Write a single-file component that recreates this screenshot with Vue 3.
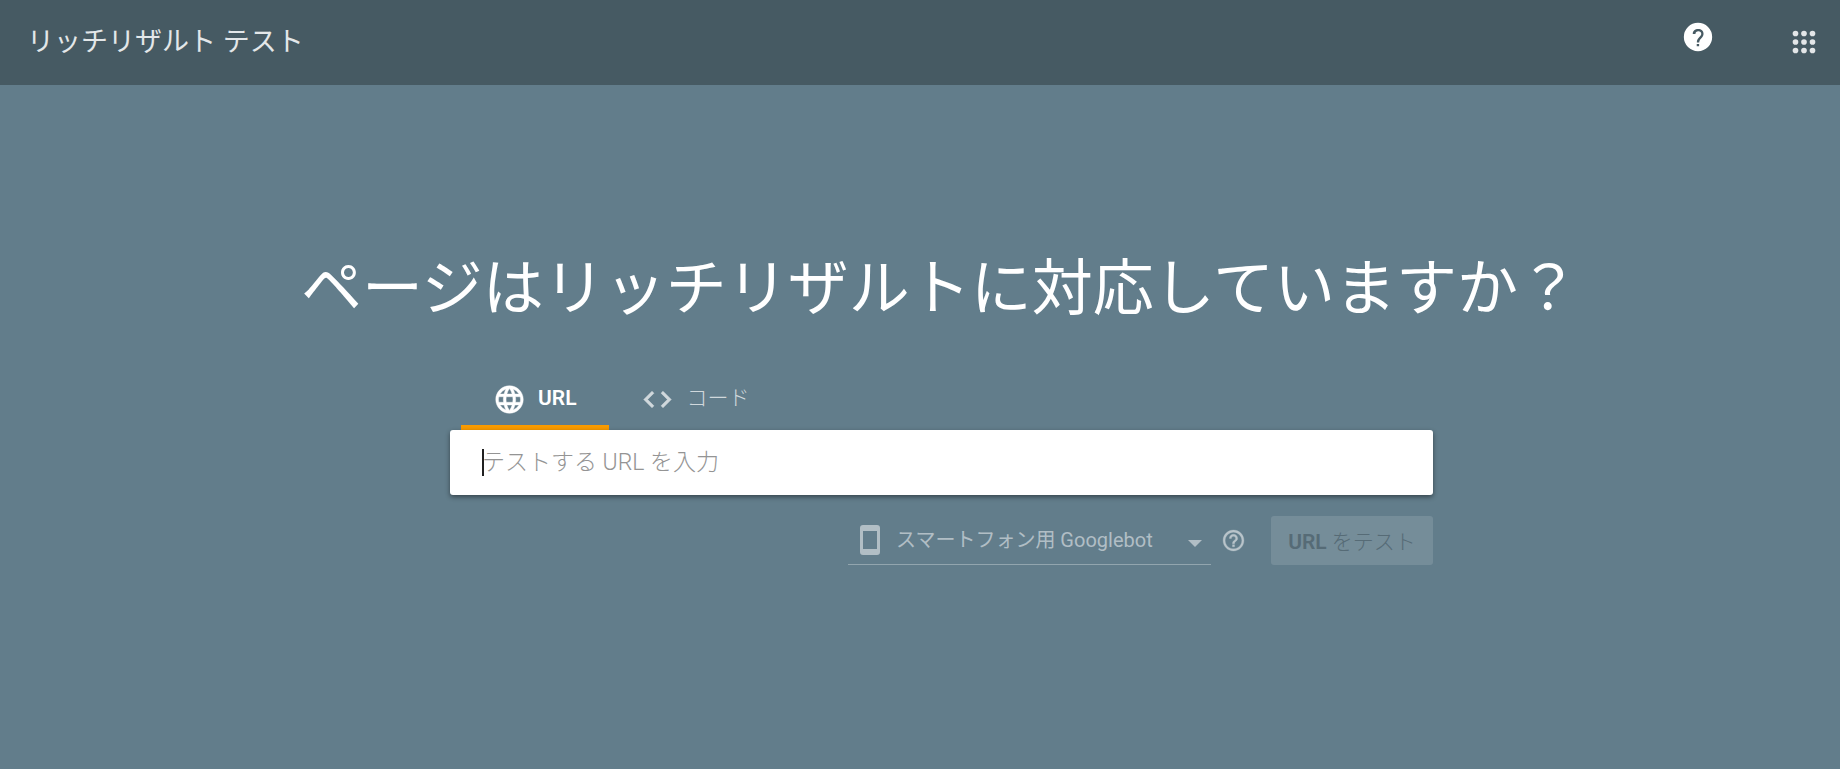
<script setup>
import { ref } from 'vue'

const url = ref('')
const mode = ref('url')
const agent = ref('smartphone')
</script>

<template>
  <div class="page">
    <header class="bar">
      <span class="product">リッチリザルト テスト</span>
      <nav class="actions">
        <button class="icon-button help" type="button" aria-label="ヘルプ">
          <svg viewBox="0 0 24 24" width="34" height="34">
            <path fill="currentColor" fill-rule="evenodd" d="M12 2a10 10 0 1 0 0 20 10 10 0 0 0 0-20zm.8 16.500h-1.700v-1.600h1.700zm2.200-6.300-.9 1c-.8.8-1.200 1.400-1.200 2.600h-1.700v-.4c0-1.200.5-2 1.300-2.900l1.100-1.200c.5-.5.7-1 .7-1.600 0-1.100-.8-1.800-2-1.800-1.300 0-2.100.7-2.100 1.900H8.300c0-2 1.600-3.400 3.800-3.400 2.300 0 3.800 1.300 3.800 3.300 0 1-.4 1.800-.9 2.500z" />
          </svg>
        </button>
        <button class="icon-button apps" type="button" aria-label="アプリ">
          <svg viewBox="0 0 24 24" width="34" height="34" fill="currentColor">
            <circle cx="6" cy="6" r="2" /><circle cx="12" cy="6" r="2" /><circle cx="18" cy="6" r="2" />
            <circle cx="6" cy="12" r="2" /><circle cx="12" cy="12" r="2" /><circle cx="18" cy="12" r="2" />
            <circle cx="6" cy="18" r="2" /><circle cx="12" cy="18" r="2" /><circle cx="18" cy="18" r="2" />
          </svg>
        </button>
      </nav>
    </header>

    <main class="content">
      <h1 class="headline">ページはリッチリザルトに対応していますか？</h1>

      <form class="tester" @submit.prevent>
        <div class="tabs" role="tablist">
          <button class="tab" :class="{ active: mode === 'url' }" type="button" role="tab" :aria-selected="mode === 'url'" @click="mode = 'url'">
            <svg viewBox="0 0 24 24" width="33" height="33">
              <path fill="currentColor" stroke="currentColor" stroke-width=".3" d="M11.990 2C6.470 2 2 6.480 2 12s4.470 10 9.990 10C17.520 22 22 17.520 22 12S17.520 2 11.990 2zm6.930 6h-2.950a15.650 15.650 0 0 0-1.380-3.560A8.030 8.030 0 0 1 18.920 8zM12 4.040c.83 1.200 1.480 2.530 1.910 3.960h-3.820c.43-1.430 1.080-2.760 1.910-3.960zM4.260 14C4.100 13.360 4 12.690 4 12s.1-1.360.26-2h3.380c-.08.66-.14 1.320-.14 2s.06 1.340.14 2H4.260zm.82 2h2.950c.32 1.250.78 2.450 1.380 3.560A7.990 7.990 0 0 1 5.080 16zm2.950-8H5.080a7.990 7.990 0 0 1 4.330-3.560A15.650 15.650 0 0 0 8.030 8zM12 19.960c-.83-1.200-1.480-2.530-1.910-3.960h3.820c-.43 1.430-1.080 2.760-1.910 3.960zM14.340 14H9.660c-.09-.66-.16-1.320-.16-2s.07-1.350.16-2h4.680c.09.65.16 1.320.16 2s-.07 1.340-.16 2zm.25 5.560c.6-1.110 1.060-2.310 1.380-3.560h2.950a8.030 8.030 0 0 1-4.330 3.560zM16.360 14c.08-.66.14-1.320.14-2s-.06-1.340-.14-2h3.380c.16.64.26 1.310.26 2s-.1 1.360-.26 2h-3.380z" />
            </svg>
            <span class="tab-label">URL</span>
          </button>
          <button class="tab" :class="{ active: mode === 'code' }" type="button" role="tab" :aria-selected="mode === 'code'" @click="mode = 'code'">
            <svg viewBox="0 0 24 24" width="33" height="33">
              <path fill="currentColor" stroke="currentColor" stroke-width=".4" d="M9.400 16.600 4.800 12l4.600-4.600L8 6l-6 6 6 6 1.400-1.400zm5.200 0 4.600-4.600-4.600-4.600L16 6l6 6-6 6-1.400-1.400z" />
            </svg>
            <span class="tab-label">コード</span>
          </button>
        </div>

        <div class="field">
          <input v-model="url" class="url-input" type="text" aria-label="テストする URL を入力" placeholder="テストする URL を入力">
          <span v-if="!url" class="caret" aria-hidden="true"></span>
        </div>

        <div class="options">
          <div class="agent">
            <svg class="phone" viewBox="0 0 20 30" width="20" height="30">
              <path fill="currentColor" fill-rule="evenodd" d="M3 0h14a3 3 0 0 1 3 3v24a3 3 0 0 1-3 3H3a3 3 0 0 1-3-3V3a3 3 0 0 1 3-3zm0 6v18h14V6z" />
            </svg>
            <select v-model="agent" class="agent-select" aria-label="ユーザー エージェント">
              <option value="smartphone">スマートフォン用 Googlebot</option>
            </select>
            <svg class="arrow" viewBox="0 0 14 7" width="14" height="7">
              <path fill="currentColor" d="M0 0h14L7 7z" />
            </svg>
          </div>
          <button class="icon-button hint" type="button" aria-label="詳細">
            <svg viewBox="0 0 24 24" width="25" height="25">
              <path fill="currentColor" stroke="currentColor" stroke-width=".3" d="M11 18h2v-2h-2v2zm1-16C6.480 2 2 6.480 2 12s4.480 10 10 10 10-4.480 10-10S17.520 2 12 2zm0 18c-4.410 0-8-3.590-8-8s3.590-8 8-8 8 3.590 8 8-3.590 8-8 8zm0-14c-2.210 0-4 1.790-4 4h2c0-1.100.9-2 2-2s2 .9 2 2c0 2-3 1.750-3 5h2c0-2.250 3-2.500 3-5 0-2.210-1.790-4-4-4z" />
            </svg>
          </button>
          <button class="submit" type="submit" disabled><b>URL</b> をテスト</button>
        </div>
      </form>
    </main>
  </div>
</template>

<style>
body {
  background: #627d8b;
}
</style>

<style scoped>
.page {
  min-height: 100vh;
  background: #627d8b;
  color: #fff;
  font-family: Roboto, "Noto Sans CJK JP", sans-serif;
}

.page * {
  box-sizing: border-box;
}

button,
input,
select {
  margin: 0;
  padding: 0;
  border: 0;
  background: none;
  color: inherit;
  font: inherit;
}

svg {
  display: block;
  flex: none;
}

.bar {
  display: flex;
  align-items: center;
  justify-content: space-between;
  height: 85px;
  padding: 0 19px 2px 27px;
  background: #465a63;
}

.product {
  font-size: 27px;
  font-weight: 400;
  line-height: 40px;
  color: #e3e7e9;
}

.actions {
  display: flex;
  align-items: center;
  gap: 72px;
}

.help {
  padding-bottom: 10px;
}

.apps {
  color: #e3e6e8;
}

.content {
  display: flex;
  flex-direction: column;
  align-items: center;
  padding: 159px 0 60px;
}

.headline {
  margin: 0 0 39px;
  padding-left: 40px;
  font-size: 61px;
  font-weight: 400;
  line-height: 90px;
}

.tester {
  width: 100%;
  max-width: 1026px;
  padding-left: 43px;
}

.tabs {
  display: flex;
  padding-left: 11px;
}

.tab {
  display: flex;
  align-items: center;
  gap: 12px;
  height: 57px;
  padding: 0 33px 0 32px;
  border-bottom: 5px solid transparent;
  color: #d0d8dc;
  font-size: 21px;
  font-weight: 300;
}

.tab.active {
  border-bottom-color: #f99b00;
  color: #fff;
  font-weight: 600;
}

.tab-label {
  padding-bottom: 3px;
  line-height: 24px;
}

.field {
  position: relative;
}

.url-input {
  display: block;
  width: 100%;
  height: 65px;
  padding: 0 32px;
  border-radius: 3px;
  outline: 0;
  background: #fff;
  box-shadow: 0 2px 5px rgba(0, 0, 0, 0.45);
  color: #212121;
  font-size: 23px;
  font-weight: 300;
}

.url-input::placeholder {
  color: #949494;
  opacity: 1;
}

.caret {
  position: absolute;
  top: 19px;
  left: 32px;
  width: 2px;
  height: 27px;
  background: #212121;
}

.options {
  display: flex;
  align-items: center;
  justify-content: flex-end;
  margin-top: 21px;
}

.agent {
  position: relative;
  display: flex;
  align-items: center;
  width: 363px;
  height: 49px;
  border-bottom: 1px solid #92a5ae;
  color: #b1bec5;
}

.phone {
  margin-left: 12px;
}

.agent-select {
  flex: 1;
  height: 48px;
  padding-left: 16px;
  appearance: none;
  font-size: 20px;
}

.arrow {
  position: absolute;
  top: 24px;
  right: 9px;
  pointer-events: none;
}

.hint {
  margin: 0 25px 0 10px;
  color: #b9c4ca;
}

.submit {
  width: 162px;
  height: 49px;
  padding-bottom: 2px;
  border-radius: 3px;
  background: #758d99;
  color: #566b76;
  font-size: 21px;
  font-weight: 300;
}

.submit b {
  font-weight: 600;
}
</style>
